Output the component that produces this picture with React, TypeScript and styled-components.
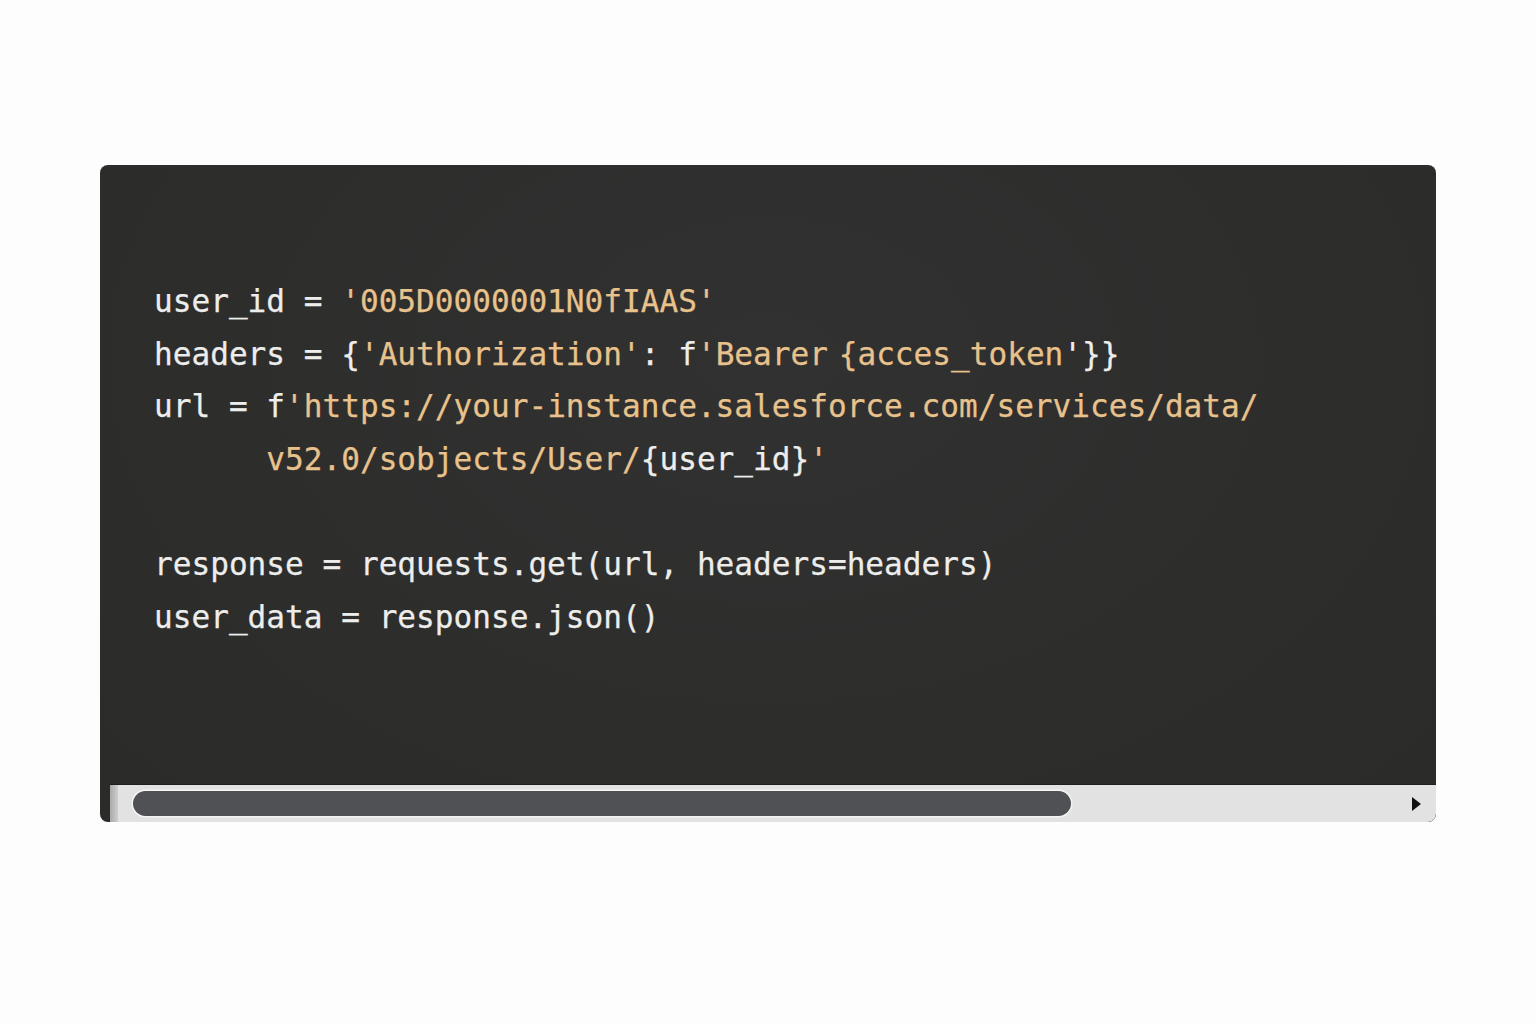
import React from "react";
import styled, { createGlobalStyle } from "styled-components";

const Global = createGlobalStyle`
  html, body { margin: 0; padding: 0; background: #fdfdfd; }
  body { width: 1536px; height: 1024px; overflow: hidden; }
`;

const Page = styled.div`
  width: 1536px;
  height: 1024px;
  box-sizing: border-box;
  padding: 165px 100px 0 100px;
  background: #fdfdfd;
`;

const Card = styled.div`
  width: 1336px;
  height: 657px;
  border-radius: 8px;
  overflow: hidden;
  background: radial-gradient(ellipse at 50% 30%, #313131 0%, #2d2d2c 60%, #2b2b2a 100%);
  display: flex;
  flex-direction: column;
`;

const Code = styled.pre`
  flex: 1;
  margin: 0;
  padding: 110px 0 0 54px;
  font-family: "DejaVu Sans Mono", "Liberation Mono", monospace;
  font-size: 31.1px;
  line-height: 52.6px;
  color: #ededec;
  -webkit-text-stroke: 0.25px currentColor;
  white-space: pre;
`;

const Str = styled.span`
  color: #e8c28c;
`;

const NarrowSpace = styled.span`
  letter-spacing: -8px;
`;

const Scrollbar = styled.div`
  height: 38px;
  margin-left: 10px;
  display: flex;
  align-items: center;
  background: #e2e2e2;
  border-top: 1px solid #1f1f1f;
  border-bottom-right-radius: 8px;
  box-sizing: border-box;
`;

const LeftEdge = styled.div`
  width: 8px;
  align-self: stretch;
  background: linear-gradient(to right, #a9a9a9, #cfcfcf);
`;

const Track = styled.div`
  flex: 1;
  display: flex;
  align-items: center;
  padding-left: 15px;
`;

const Thumb = styled.div`
  width: 938px;
  height: 25px;
  border-radius: 13px;
  background: #505154;
  box-shadow: 0 0 0 1.5px #f4f4f4;
`;

const Arrow = styled.div`
  width: 0;
  height: 0;
  margin-right: 15px;
  border-top: 7px solid transparent;
  border-bottom: 7px solid transparent;
  border-left: 9px solid #111;
`;

export default function App() {
  return (
    <>
      <Global />
      <Page>
        <Card>
          <Code>
            {"user_id = "}<Str>{"'005D0000001N0fIAAS'"}</Str>{"\n"}
            {"headers = {"}<Str>{"'Authorization'"}</Str>{": f"}<Str>{"'Bearer"}<NarrowSpace>{" "}</NarrowSpace>{"{acces_token"}</Str>{"'}}"}{"\n"}
            {"url = f"}<Str>{"'https://your-instance.salesforce.com/services/data/"}</Str>{"\n"}
            {"      "}<Str>{"v52.0/sobjects/User/"}</Str>{"{user_id}"}<Str>{"'"}</Str>{"\n"}
            {"\n"}
            {"response = requests.get(url, headers=headers)"}{"\n"}
            {"user_data = response.json()"}
          </Code>
          <Scrollbar>
            <LeftEdge />
            <Track>
              <Thumb />
            </Track>
            <Arrow />
          </Scrollbar>
        </Card>
      </Page>
    </>
  );
}
